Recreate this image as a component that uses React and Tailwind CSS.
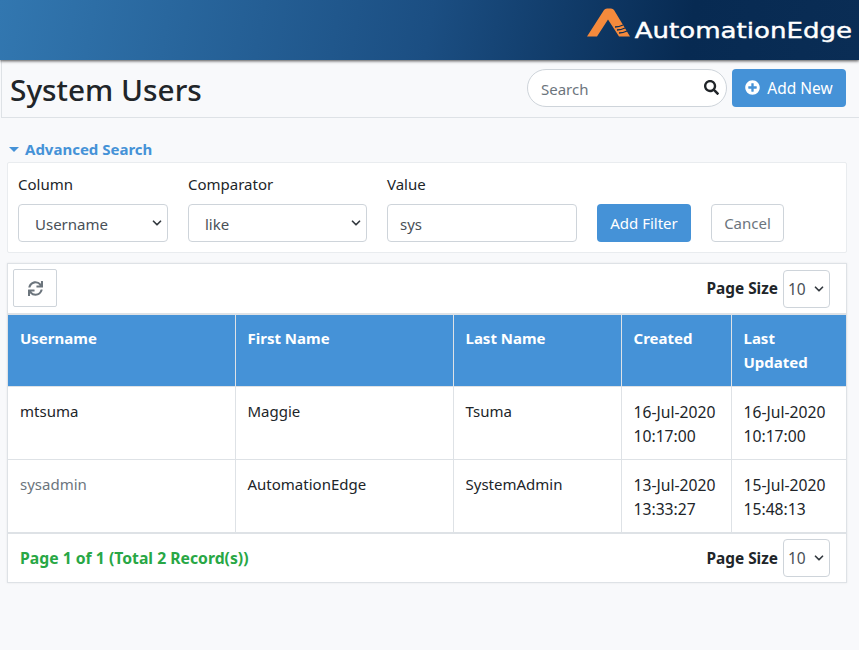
import { ChevronDown } from "lucide-react";
import { FaSearch, FaPlusCircle, FaSync } from "react-icons/fa";

const rows = [
  { username: "mtsuma", first: "Maggie", last: "Tsuma", created: ["16-Jul-2020", "10:17:00"], updated: ["16-Jul-2020", "10:17:00"], muted: false },
  { username: "sysadmin", first: "AutomationEdge", last: "SystemAdmin", created: ["13-Jul-2020", "13:33:27"], updated: ["15-Jul-2020", "15:48:13"], muted: true },
];

function SelectBox({ label, widthClass, paddingClass }) {
  return (
    <div className={`relative h-[38px] ${widthClass}`}>
      <select className={`appearance-none w-full h-full pt-[2px] bg-white border border-[#ced4da] rounded-[4px] text-[15px] text-[#495057] outline-none ${paddingClass}`}>
        <option>{label}</option>
      </select>
      <ChevronDown size={14} strokeWidth={3} className="absolute right-[4px] top-[12px] text-[#343a40] pointer-events-none" />
    </div>
  );
}

function PageSize({ labelClass = "" }) {
  return (
    <div className="flex items-center gap-[5px]">
      <span className={`text-[15.4px] font-bold text-[#212529] ${labelClass}`}>Page Size</span>
      <div className="relative w-[47px] h-[38px]">
        <select className="appearance-none w-full h-full pt-[2px] bg-white border border-[#ced4da] rounded-[4px] text-[15.5px] text-[#495057] pl-[4px] outline-none">
          <option>10</option>
        </select>
        <ChevronDown size={14} strokeWidth={3} className="absolute right-[4px] top-[12px] text-[#343a40] pointer-events-none" />
      </div>
    </div>
  );
}

export default function App() {
  return (
    <div className="w-[859px] h-[650px] overflow-hidden bg-[#f8f9fb] text-[#212529] font-['Noto_Sans',sans-serif]">
      <header className="h-[60px] flex justify-end pr-[6px] pt-[8px] bg-[linear-gradient(100deg,#3277b0_0%,#1b4e82_50%,#072a52_80%,#0a2d55_100%)] shadow-[0_1px_3px_rgba(0,0,0,0.7)] relative">
        <div className="flex items-start gap-[4px]">
          <svg width="43" height="29" viewBox="0 0 43 28">
            <path d="M0 28 L17 1.5 Q18 0 20 0 H24 Q26 0 27 1.5 L43 28 H32 L21 11 L10 28 Z" fill="#f58a3c" />
            <path d="M28 18.5 Q32 18.5 36 16.5 M30 21.5 Q34 21.5 38 19.5 M32 24.5 Q36 24.5 40 22.5" stroke="#0a2c55" strokeWidth="1.3" fill="none" />
          </svg>
          <span className="mt-[11px] w-[176px] ml-[43px] origin-right scale-x-[1.24] text-[21px] leading-[24px] whitespace-nowrap font-['DejaVu_Sans',sans-serif] text-white [-webkit-text-stroke:0.4px_white]">AutomationEdge</span>
        </div>
      </header>

      <div className="h-[58px] ml-[1px] flex items-center justify-between border-l border-b border-[#dee2e6] pl-[8px] pr-[13px]">
        <h1 className="text-[29.8px] font-medium leading-none pt-[2px]">System Users</h1>
        <div className="flex items-center gap-[5px] pb-[2px]">
          <div className="relative w-[200px] h-[38px]">
            <input
              placeholder="Search"
              className="w-full h-full pt-[2px] bg-white border border-[#ced4da] rounded-full pl-[13px] text-[15px] outline-none placeholder:text-[#6c757d]"
            />
            <FaSearch size={15} className="absolute right-[8px] top-[11px] text-[#212529]" />
          </div>
          <button className="w-[114px] h-[38px] bg-[#4592d7] rounded-[4px] text-white text-[15.5px] flex items-center justify-center gap-[7px]">
            <FaPlusCircle size={15} />
            <span className="pt-[2px]">Add New</span>
          </button>
        </div>
      </div>

      <div className="mt-[21px] ml-[9px] h-[20px] flex items-center gap-[6px] text-[15px] font-bold text-[#4592d7]">
        <span className="w-0 h-0 border-x-[5px] border-x-transparent border-t-[5px] border-t-[#4592d7]" />
        Advanced Search
      </div>

      <div className="mt-[3px] mx-[7px] w-[840px] h-[91px] bg-white border border-[#e9ecef] rounded-[2px] pl-[10px] pt-[11px] flex">
        <div className="flex flex-col w-[170px]">
          <label className="text-[15px] leading-[20px] mb-[10px]">Column</label>
          <SelectBox label="Username" widthClass="w-[150px]" paddingClass="pl-[16px]" />
        </div>
        <div className="flex flex-col w-[199px]">
          <label className="text-[15px] leading-[20px] mb-[10px]">Comparator</label>
          <SelectBox label="like" widthClass="w-[179px]" paddingClass="pl-[16px]" />
        </div>
        <div className="flex flex-col w-[210px]">
          <label className="text-[15px] leading-[20px] mb-[10px]">Value</label>
          <input defaultValue="sys" className="w-[190px] h-[38px] pt-[2px] border border-[#ced4da] rounded-[4px] pl-[12px] text-[15px] text-[#495057] outline-none" />
        </div>
        <div className="flex gap-[20px] pt-[30px]">
          <button className="w-[94px] h-[38px] bg-[#4592d7] rounded-[4px] text-white text-[15px]">Add Filter</button>
          <button className="w-[73px] h-[38px] bg-white border border-[#ced4da] rounded-[4px] text-[#6c757d] text-[15px]">Cancel</button>
        </div>
      </div>

      <div className="mt-[10px] mx-[7px] w-[840px] bg-white border border-[#dee2e6] shadow-[0_0_2px_rgba(0,0,0,0.08)]">
        <div className="h-[49px] flex items-center justify-between pl-[5px] pr-[16px]">
          <button className="w-[44px] h-[38px] mb-[1px] border border-[#ced4da] rounded-[2px] flex items-center justify-center text-[#6c757d]">
            <FaSync size={15} />
          </button>
          <PageSize />
        </div>
        <table className="w-[838px] table-fixed border-collapse border-t-2 border-[#dee2e6] text-[15px]">
          <colgroup>
            <col className="w-[227px]" />
            <col className="w-[218px]" />
            <col className="w-[168px]" />
            <col className="w-[110px]" />
            <col className="w-[115px]" />
          </colgroup>
          <thead>
            <tr className="h-[72px] bg-[#4592d7] text-white align-top text-left">
              <th className="px-[12px] pt-[11px] leading-[24px] font-bold border-r border-[#dee2e6]">Username</th>
              <th className="px-[12px] pt-[11px] leading-[24px] font-bold border-r border-[#dee2e6]">First Name</th>
              <th className="px-[12px] pt-[11px] leading-[24px] font-bold border-r border-[#dee2e6]">Last Name</th>
              <th className="px-[12px] pt-[11px] leading-[24px] font-bold border-r border-[#dee2e6]">Created</th>
              <th className="px-[12px] pt-[11px] leading-[24px] font-bold">Last Updated</th>
            </tr>
          </thead>
          <tbody>
            {rows.map((r) => (
              <tr key={r.username} className="h-[73px] align-top border-t border-[#dee2e6]">
                <td className={`px-[12px] pt-[12px] leading-[24px] border-r border-[#dee2e6] ${r.muted ? "text-[#6c757d]" : ""}`}>{r.username}</td>
                <td className="px-[12px] pt-[12px] leading-[24px] border-r border-[#dee2e6]">{r.first}</td>
                <td className="px-[12px] pt-[12px] leading-[24px] border-r border-[#dee2e6]">{r.last}</td>
                <td className="px-[12px] pt-[13px] leading-[24px] border-r border-[#dee2e6] text-[15.7px]">{r.created[0]}<br />{r.created[1]}</td>
                <td className="px-[12px] pt-[13px] leading-[24px] text-[15.7px]">{r.updated[0]}<br />{r.updated[1]}</td>
              </tr>
            ))}
          </tbody>
        </table>
        <div className="h-[50px] border-t-2 border-[#dee2e6] flex items-center justify-between pl-[12px] pr-[16px]">
          <span className="pt-[2px] text-[15.75px] font-bold text-[#28a745]">Page 1 of 1 (Total 2 Record(s))</span>
          <PageSize labelClass="pt-[2px]" />
        </div>
      </div>
    </div>
  );
}
